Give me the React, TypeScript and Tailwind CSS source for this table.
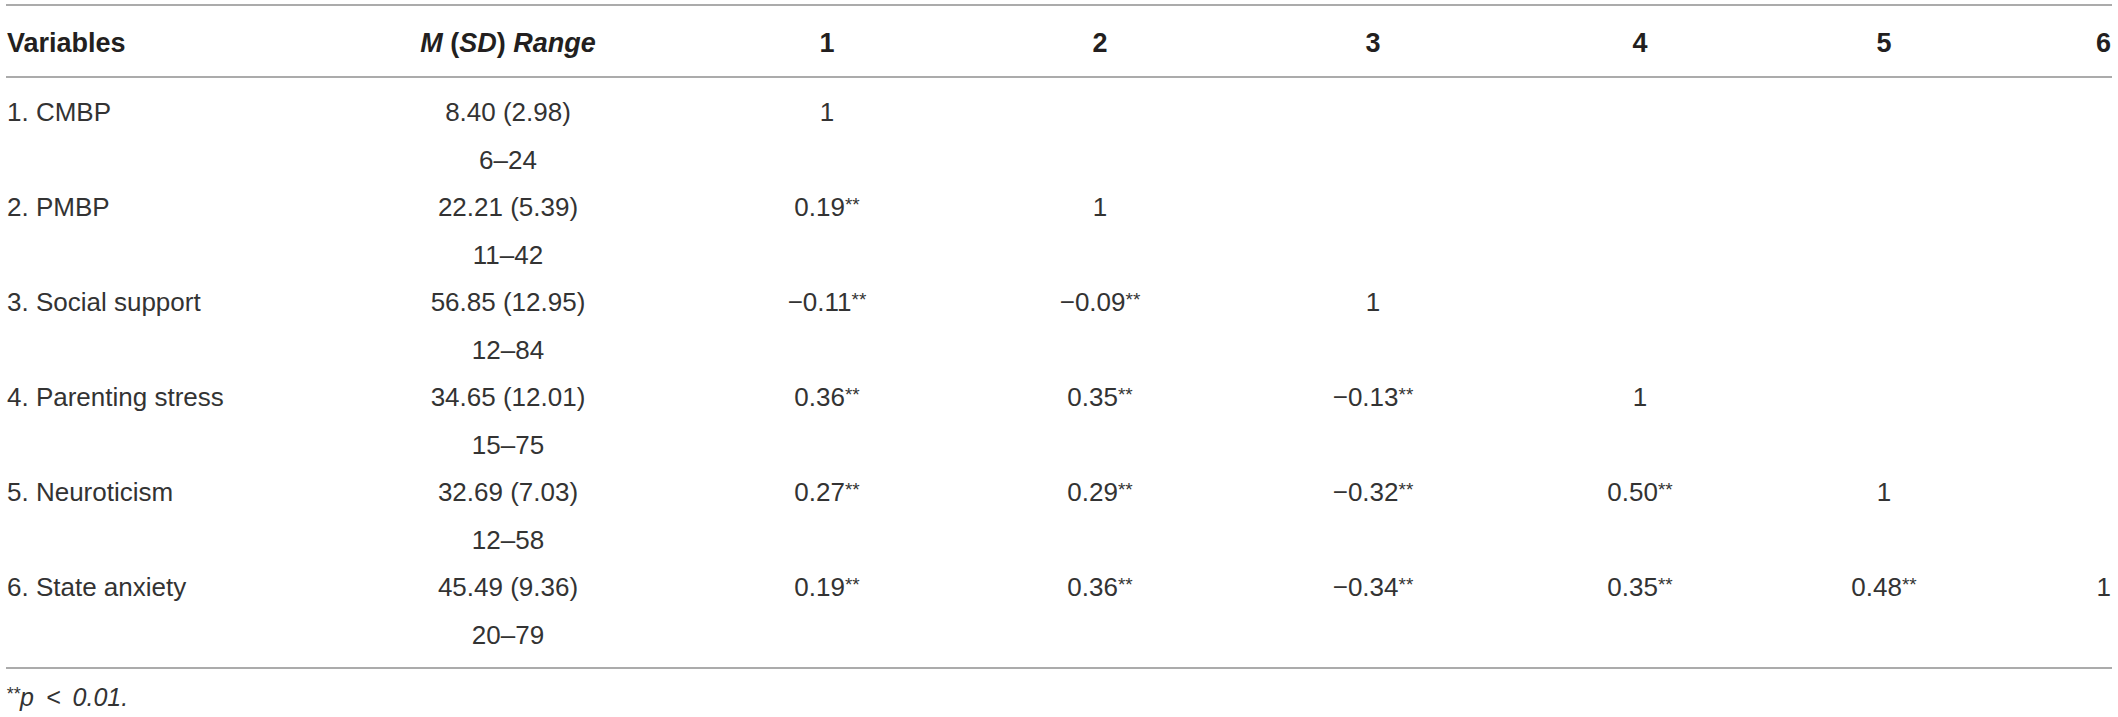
import React from "react";

const COLS =
  "grid grid-cols-[343px_318px_320px_226px_320px_214px_274px_91px]";

type Row = { label: string; mean: string; range: string; vals: string[] };

const rows: Row[] = [
  { label: "1. CMBP", mean: "8.40 (2.98)", range: "6–24", vals: ["1"] },
  { label: "2. PMBP", mean: "22.21 (5.39)", range: "11–42", vals: ["0.19**", "1"] },
  {
    label: "3. Social support",
    mean: "56.85 (12.95)",
    range: "12–84",
    vals: ["−0.11**", "−0.09**", "1"],
  },
  {
    label: "4. Parenting stress",
    mean: "34.65 (12.01)",
    range: "15–75",
    vals: ["0.36**", "0.35**", "−0.13**", "1"],
  },
  {
    label: "5. Neuroticism",
    mean: "32.69 (7.03)",
    range: "12–58",
    vals: ["0.27**", "0.29**", "−0.32**", "0.50**", "1"],
  },
  {
    label: "6. State anxiety",
    mean: "45.49 (9.36)",
    range: "20–79",
    vals: ["0.19**", "0.36**", "−0.34**", "0.35**", "0.48**", "1"],
  },
];

function Val({ v }: { v: string }) {
  if (v.endsWith("**")) {
    return (
      <span>
        {v.slice(0, -2)}
        <span className="relative -top-[5px] text-[19px]">**</span>
      </span>
    );
  }
  return <span>{v}</span>;
}

export default function App() {
  return (
    <div
      className="w-[2118px] h-[717px] bg-white text-[#231f20] overflow-hidden"
      style={{ fontFamily: '"Liberation Sans", Arial, sans-serif' }}
    >
      <div className="ml-[6px] w-[2106px] pt-[4px]">
        <div className="h-[2px] bg-[#ababab]" />
        <div className={`${COLS} h-[70px] pt-[17px] text-[27px] font-bold leading-[40px]`}>
          <div className="pl-[1px]">Variables</div>
          <div className="text-center">
            <i>M</i> (<i>SD</i>) <i>Range</i>
          </div>
          <div className="text-center">1</div>
          <div className="text-center">2</div>
          <div className="text-center">3</div>
          <div className="text-center">4</div>
          <div className="text-center">5</div>
          <div className="text-right pr-[1px]">6</div>
        </div>
        <div className="h-[2px] bg-[#ababab]" />
        <div className="pt-[11px] pb-[8px] text-[26px] leading-[47.5px] text-[#333333]">
          {rows.map((r) => (
            <div key={r.label} className={`${COLS} h-[95px]`}>
              <div className="pl-[1px]">{r.label}</div>
              <div className="text-center">
                <div>{r.mean}</div>
                <div>{r.range}</div>
              </div>
              {[0, 1, 2, 3, 4, 5].map((i) => (
                <div key={i} className={i === 5 ? "text-right pr-[1px]" : "text-center"}>
                  {r.vals[i] !== undefined ? <Val v={r.vals[i]} /> : null}
                </div>
              ))}
            </div>
          ))}
        </div>
        <div className="h-[2px] bg-[#ababab]" />
        <div className="pt-[13px] text-[25px] leading-[30px] italic text-[#333333]">
          <span className="relative -top-[6px] text-[18px]">**</span>
          <span>p</span>
          <span className="mx-[12px]">&lt;</span>
          <span>0.01.</span>
        </div>
      </div>
    </div>
  );
}
